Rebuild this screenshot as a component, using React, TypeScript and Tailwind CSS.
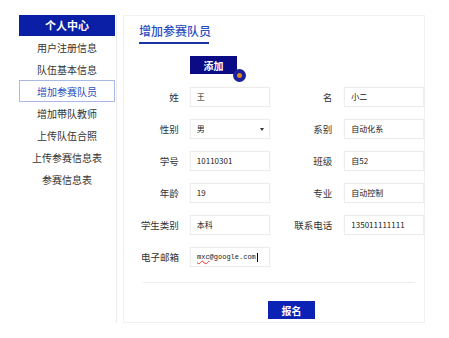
import React from "react";

const items = ["用户注册信息", "队伍基本信息", "增加参赛队员", "增加带队教师", "上传队伍合照", "上传参赛信息表", "参赛信息表"];

function Field({ label, value, mono, select, ml }: { label: string; value: string; mono?: boolean; select?: boolean; ml: string }) {
  return (
    <>
      <div className={`${ml} w-[40px] flex justify-end whitespace-nowrap text-[9.5px] leading-[20px] text-[#333]`}>{label}</div>
      <div className={`${ml === "ml-0" ? "ml-[11px]" : "ml-[12px]"} w-[80px] h-[20px] border border-[#ededed] bg-white flex items-center pl-[6px] pr-[5px] shadow-[0_0_2px_rgba(0,0,0,0.04)]`}>
        {mono ? (
          <span className="font-['Liberation_Mono',monospace] text-[7px] text-[#222] leading-none whitespace-nowrap">
            <span className="underline decoration-wavy decoration-[#e33] decoration-1">mxc</span>@google.com<span className="inline-block w-px h-[9px] bg-black align-middle ml-px" />
          </span>
        ) : (
          <span className="text-[8px] text-[#222] leading-none whitespace-nowrap">{value}</span>
        )}
        {select && <span className="ml-auto w-0 h-0 border-l-[2.5px] border-r-[2.5px] border-t-[3px] border-l-transparent border-r-transparent border-t-[#333]" />}
      </div>
    </>
  );
}

function Row({ a, b }: { a: { label: string; value: string; mono?: boolean; select?: boolean }; b?: { label: string; value: string } }) {
  return (
    <div className="flex h-[20px] items-center pl-[15px]">
      <Field {...a} ml="ml-0" />
      {b && <Field {...b} ml="ml-[23px]" />}
    </div>
  );
}

export default function App() {
  return (
    <div className="flex items-start w-[449px] h-[338px] bg-white pt-[15px] pl-[19px] font-['Noto_Sans_CJK_SC','Noto_Sans',sans-serif] overflow-hidden">
      <div className="w-[98px] h-[308px] border-r border-[#ebebeb] flex flex-col">
        <div className="w-[96px] h-[21px] bg-[#0a1ea6] text-white text-[11px] font-bold flex items-center justify-center">个人中心</div>
        {items.map((t, i) => (
          <div
            key={t}
            className={`w-[96px] h-[22px] flex items-center justify-center text-[10px] ${i === 2 ? "border border-[#a9b9e3] text-[#2b4fc0]" : "text-[#333]"}`}
          >
            {t}
          </div>
        ))}
      </div>
      <div className="ml-[6px] w-[302px] h-[308px] border border-[#f1f1f1] flex flex-col">
        <div className="flex pl-[15px] pt-[7px]">
          <div className="w-[70px] text-[12px] font-medium leading-[16px] text-[#2b4fc0] pb-[3px] border-b-2 border-[#1c33a6] whitespace-nowrap">增加参赛队员</div>
        </div>
        <div className="relative ml-[66px] mt-[12px] w-[47px] h-[18px] bg-[#0b0b85] text-white text-[10px] font-bold flex items-center justify-center">
          添加
          <span className="absolute left-[43px] top-[13px] w-[13px] h-[13px] rounded-full bg-[#1a1f9a] flex items-center justify-center">
            <span className="w-[5px] h-[5px] rounded-full bg-[#d98a1a]" />
          </span>
        </div>
        <div className="mt-[13px] flex flex-col gap-[12px]">
          <Row a={{ label: "姓", value: "王" }} b={{ label: "名", value: "小二" }} />
          <Row a={{ label: "性别", value: "男", select: true }} b={{ label: "系别", value: "自动化系" }} />
          <Row a={{ label: "学号", value: "10110301" }} b={{ label: "班级", value: "自52" }} />
          <Row a={{ label: "年龄", value: "19" }} b={{ label: "专业", value: "自动控制" }} />
          <Row a={{ label: "学生类别", value: "本科" }} b={{ label: "联系电话", value: "135011111111" }} />
          <Row a={{ label: "电子邮箱", value: "", mono: true }} />
        </div>
        <div className="mt-[15px] ml-[19px] w-[272px] h-px bg-[#ececec]" />
        <div className="mt-[18px] ml-[144px] w-[47px] h-[18px] bg-[#0c22b4] text-white text-[10px] font-bold flex items-center justify-center">报名</div>
      </div>
    </div>
  );
}
